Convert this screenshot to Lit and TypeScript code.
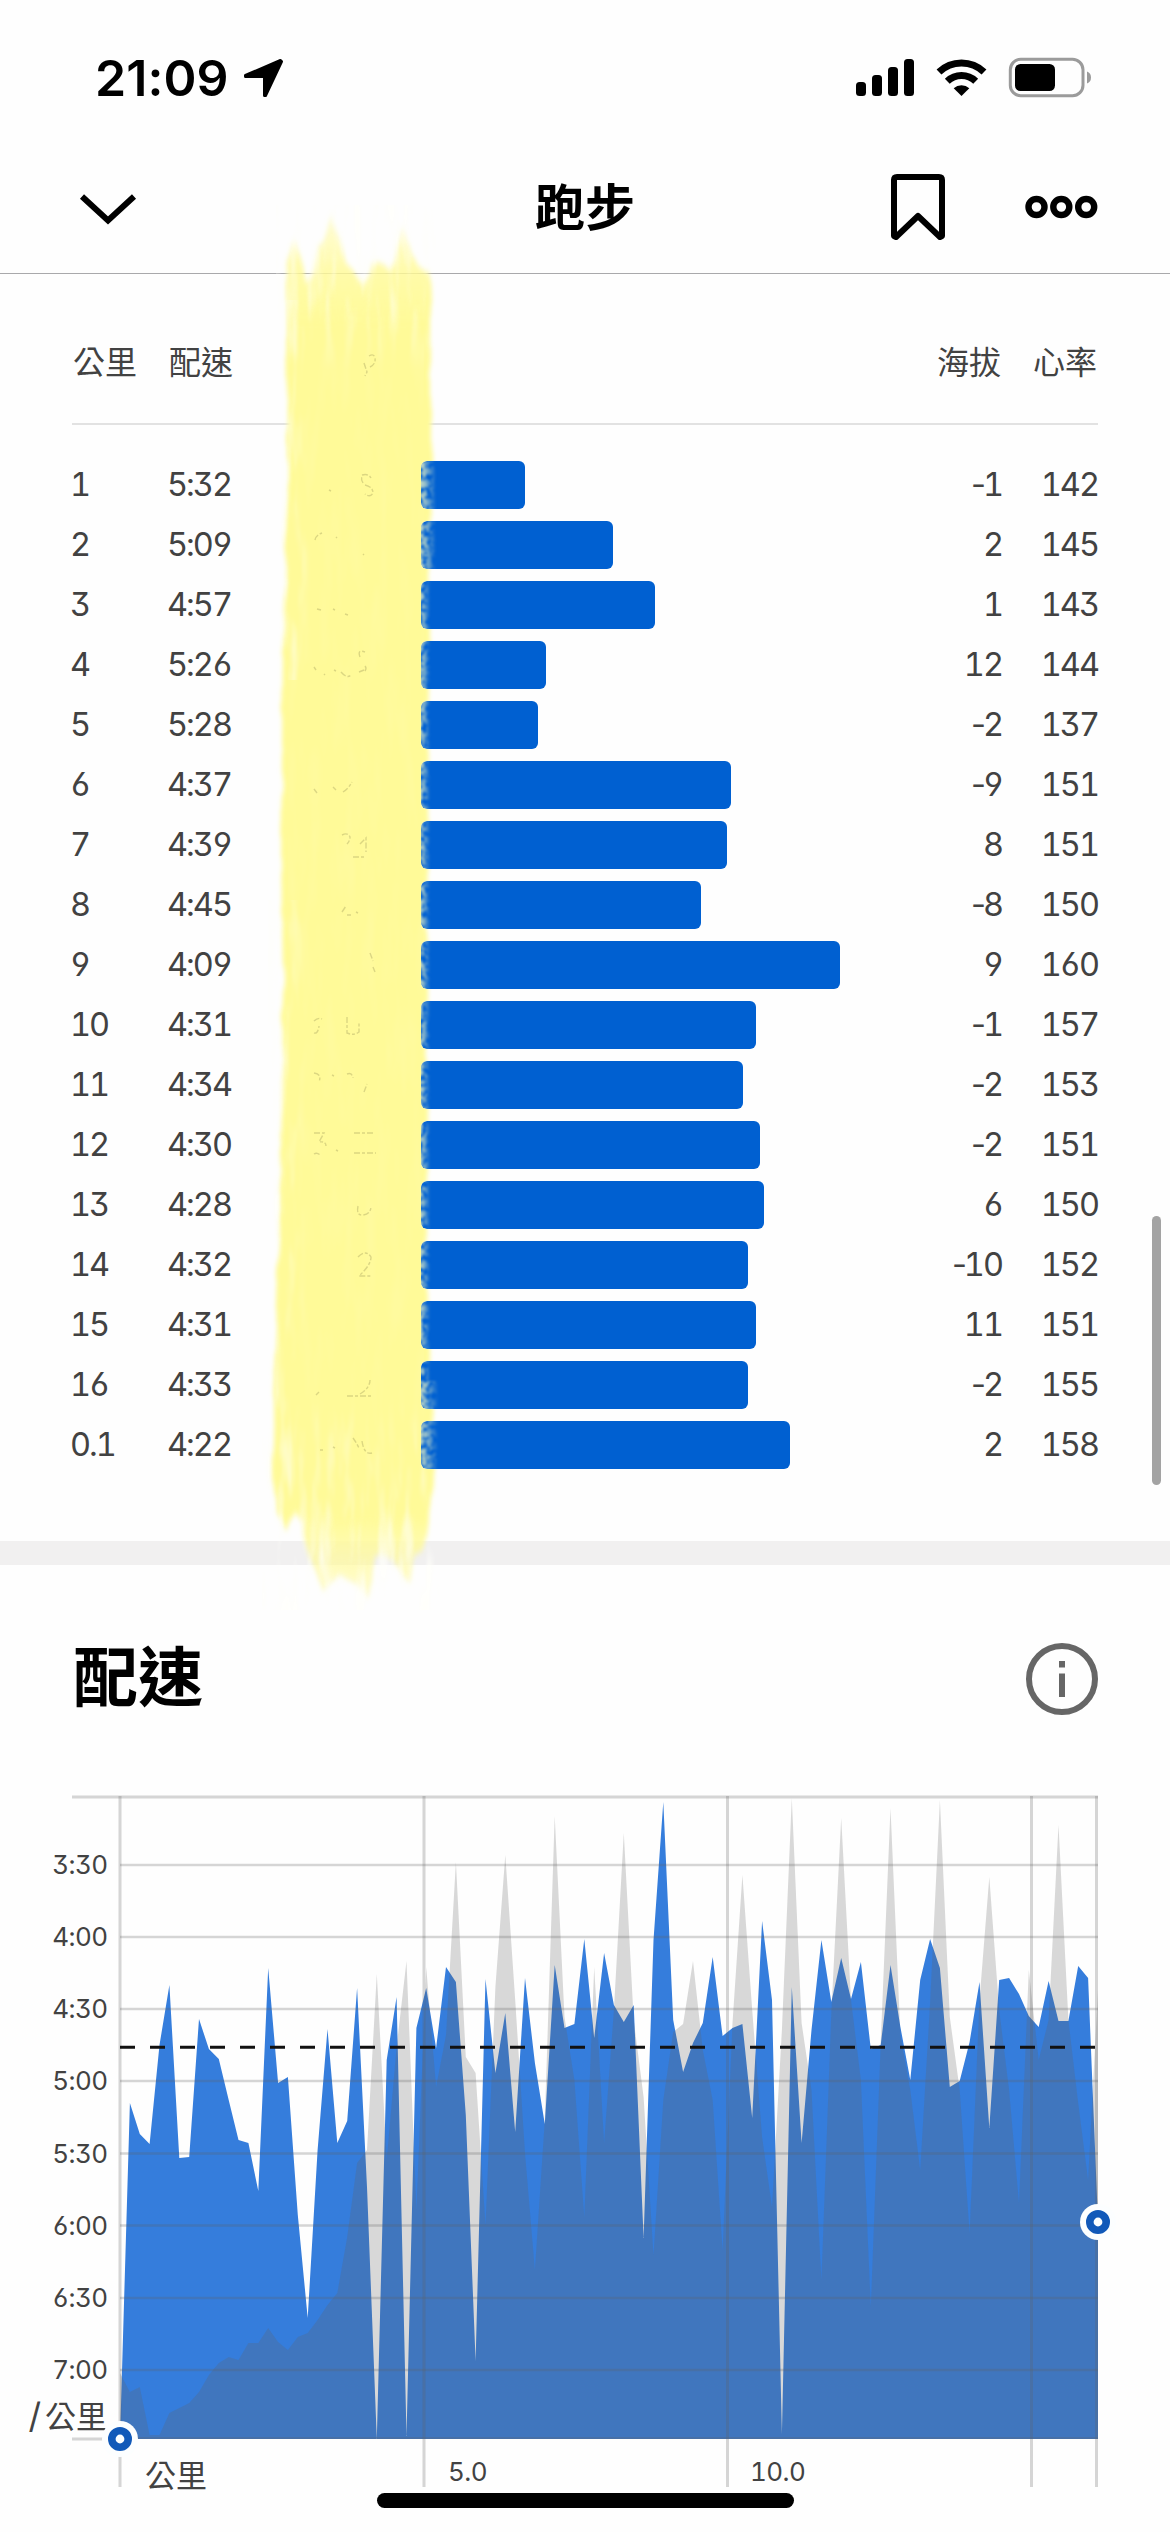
import { LitElement, html, css, svg } from "lit";
import { customElement } from "lit/decorators.js";

interface Split {
  km: string;
  pace: string;
  width: number;
  elev: string;
  hr: string;
}

const rows: [string, string, number, string, string][] = [
  ["1", "5:32", 104, "-1", "142"],
  ["2", "5:09", 192, "2", "145"],
  ["3", "4:57", 234, "1", "143"],
  ["4", "5:26", 125, "12", "144"],
  ["5", "5:28", 117, "-2", "137"],
  ["6", "4:37", 310, "-9", "151"],
  ["7", "4:39", 306, "8", "151"],
  ["8", "4:45", 280, "-8", "150"],
  ["9", "4:09", 419, "9", "160"],
  ["10", "4:31", 335, "-1", "157"],
  ["11", "4:34", 322, "-2", "153"],
  ["12", "4:30", 339, "-2", "151"],
  ["13", "4:28", 343, "6", "150"],
  ["14", "4:32", 327, "-10", "152"],
  ["15", "4:31", 335, "11", "151"],
  ["16", "4:33", 327, "-2", "155"],
  ["0.1", "4:22", 369, "2", "158"],
];
const splits: Split[] = rows.map(([km, pace, width, elev, hr]) => ({ km, pace, width, elev, hr }));

/* Chart samples, one every 978/99 px, as heights on the chart canvas. */
const pace = [
  2439, 2103, 2134, 2144, 2045, 1985, 2158, 2157, 2019, 2049, 2059, 2100, 2140, 2143, 2191, 1968, 2083, 2077, 2215, 2318,
  2150, 2029, 2143, 2121, 1988, 2187, 2439, 2060, 1997, 2436, 2028, 1988, 2048, 1967, 1982, 2115, 2361, 1979, 2073, 2013,
  2132, 1978, 2063, 2124, 1965, 2028, 2024, 1939, 2038, 1953, 2005, 2022, 2005, 2238, 1940, 1802, 2020, 2072, 2043, 2023,
  1957, 2036, 2028, 2024, 2118, 1921, 2000, 2434, 1987, 2143, 2030, 1940, 2002, 1958, 1999, 1962, 2049, 2045, 1965, 2027,
  2080, 1980, 1939, 1968, 2087, 2081, 2042, 1982, 2128, 1980, 1978, 1994, 2016, 2027, 1981, 2021, 2021, 1966, 1978, 2222,
];
const shade = [
  2373, 2392, 2387, 2435, 2435, 2413, 2408, 2403, 2392, 2375, 2363, 2357, 2360, 2343, 2343, 2328, 2342, 2350, 2337, 2333,
  2320, 2305, 2293, 2237, 2163, 2150, 1974, 2160, 2047, 1961, 2210, 1967, 2087, 2035, 1862, 2057, 2073, 2225, 1987, 1855,
  2000, 2153, 2270, 2120, 1816, 2017, 2080, 2217, 1967, 2143, 2010, 1833, 2020, 2097, 2255, 2100, 2032, 2024, 1961, 2050,
  2100, 2250, 2023, 1875, 2010, 2137, 2207, 2030, 1798, 2023, 2090, 2280, 2013, 1818, 2000, 2080, 2307, 2043, 1808, 2035,
  2090, 2170, 2003, 1800, 2017, 2090, 2233, 2000, 1877, 2010, 2090, 2203, 1970, 2060, 2020, 1825, 2020, 2103, 2180, 1990,
];
const TOP = 1770;
const px = (i: number) => 120 + (i * 978) / 99;
const area = (v: number[]) =>
  `M120 ${2439 - TOP} ` + v.map((y, i) => `L${px(i).toFixed(1)} ${y - TOP}`).join(" ") + ` L1098 ${2439 - TOP} Z`;

const yTicks: [string, number][] = [
  ["3:30", 95], ["4:00", 167], ["4:30", 239], ["5:00", 311], ["5:30", 383.5], ["6:00", 455.5], ["6:30", 528], ["7:00", 600],
];

/* Remnants of the digits that still show through the marker. */
const remnants = [
  "M369 356q5-3 6 2q1 6-5 9m-6-4l3 9l-2 4",
  "M362 475q6-2 9 3m-8 5q-3-5 0-8m2 10q8 2 8 8q-3 5-8 1m-36-4l2 1",
  "M315 540q1-5 7-7m14 4l1 1m26 16l1 1",
  "M317 609l4 1m12-1l2 1m10 4l3 1",
  "M314 667l2 3m8 4l1 1m9-5l2 1m5 1q6 7 10 3m9-18q-3-8 5-5m0 14q2 2 0 5m-6 1l5-2",
  "M314 789l3 4m16-6l3 3m7 2q6-4 9-10",
  "M342 835q6-3 8 2q0 4-3 7m13 0l6-6v14m-13 5h13",
  "M342 912l4-6m1 9h4m5-3l2 1",
  "M370 953l3 8m0 6l2 5",
  "M314 1033q4 1 5-7m-5-5q4-4 8-2m25-2v16q7 3 12-1v-10",
  "M314 1073q8 1 5 9m13-7l2 1m13-2q5-2 6 4m11 14l3-8",
  "M314 1133h10l-5 9q7-1 7 4m-12 8q3-2 6 1m16-5l2 1m16-18h20m-20 20h22",
  "M358 1206q-2 10 5 9q8-1 8-9",
  "M358 1257q8-8 13 0q0 8-12 19h13",
  "M316 1395l3-3m28 4h26m-13-2q10-6 10-14",
  "M320 1450h3m10-3l2 1m18-10q3 4 6 10m3-7q2 14 10 12",
];

@customElement("app-root")
export class AppRoot extends LitElement {
  static styles = css`
    :host {
      display: block;
      position: relative;
      width: 1170px;
      height: 2532px;
      overflow: hidden;
      background: #fefefe;
      color: #424242;
      font-family: "Inter", "Noto Sans CJK TC", sans-serif;
    }
    svg { display: block; overflow: visible; }
    .status {
      box-sizing: border-box;
      height: 122px;
      padding: 58px 79px 0 95px;
      display: flex;
      justify-content: space-between;
      align-items: flex-start;
      color: #000;
    }
    .clock { display: flex; align-items: flex-start; gap: 13px; }
    .time { font-size: 50px; line-height: 40px; font-weight: 600; letter-spacing: 0.1px; width: 135px; white-space: nowrap; }
    .nav {
      box-sizing: border-box;
      height: 152px;
      padding: 0 72px 0 80px;
      border-bottom: 1px solid #a9a9ab;
      display: grid;
      grid-template-columns: 1fr auto 1fr;
      align-items: start;
    }
    .nav .left { padding-top: 72px; }
    .nav h1 { margin: 0; padding-top: 54px; font-size: 50px; line-height: 64px; font-weight: 700; color: #000; transform: translateX(-4px); }
    .nav .right { display: flex; justify-content: flex-end; gap: 80px; padding-top: 52px; }
    .nav .dots { padding-top: 21px; }
    .table { box-sizing: border-box; height: 1267px; padding: 0 72px; }
    .row, .head {
      display: grid;
      grid-template-columns: 97px 252px 1fr 160px 96px;
      align-items: center;
      padding-right: 1px;
    }
    .head {
      box-sizing: border-box;
      height: 151px;
      padding-top: 53px;
      padding-bottom: 24px;
      border-bottom: 2px solid #e2e2e2;
      margin-bottom: 30px;
      font-size: 32px;
      line-height: 40px;
    }
    .head .first { padding-left: 1px; }
    .row { height: 60px; font-size: 32.5px; line-height: 60px; letter-spacing: -2px; font-feature-settings: "tnum", "cv03", "cv04", "cv09"; }
    .row .km, .row .pace { margin-left: -2px; }
    .num { text-align: right; }
    .row .num { margin-right: -1px; }
    .minus { font-feature-settings: "tnum" 0; margin-right: -1px; }
    .bar { height: 48px; border-radius: 6px; background: #0060d1; }
    .divider { height: 24px; background: #f1f0f0; }
    .title { display: flex; justify-content: space-between; align-items: flex-start; padding: 78px 72px 0 73px; height: 127px; }
    .title h2 { margin: 0; font-size: 65px; line-height: 70px; font-weight: 700; color: #000; }
    .axis { font-size: 26px; fill: #424242; letter-spacing: -0.6px; font-feature-settings: "tnum", "cv03", "cv04", "cv09"; }
    .unit { font-size: 31px; letter-spacing: 0; }
    .slash { font-size: 35px; letter-spacing: 4px; }
    .brush { position: absolute; left: 0; top: 0; pointer-events: none; }
    .scroll { position: absolute; left: 1152px; top: 1216px; width: 9px; height: 269px; border-radius: 5px; background: #a3a3a3; }
    .home { position: absolute; left: 377px; top: 2493px; width: 417px; height: 15px; border-radius: 8px; background: #000; }
  `;

  private statusBar() {
    return html`
      <div class="status">
        <div class="clock">
          <span class="time">21:09</span>
          <svg width="40" height="40" viewBox="0 0 40 40">
            <path d="M37.500 2.500L38.500 3.500L22.500 37.500L21.500 37.500V19.500L20.500 18.500H2.500V17.500Z" stroke="#000" stroke-width="3" stroke-linejoin="round" />
          </svg>
        </div>
        <svg width="235" height="40" viewBox="856 58 235 40">
          <rect x="856" y="82" width="10" height="14" rx="3.500" />
          <rect x="872" y="75" width="10" height="21" rx="3.500" />
          <rect x="888" y="67" width="10" height="29" rx="3.500" />
          <rect x="904" y="59" width="10" height="37" rx="3.500" />
          <path d="M961.500 96L953.700 88.200A11.500 11.500 0 0 1 969.300 88.200Z" />
          <path d="M947.300 81.200A20.500 20.500 0 0 1 975.700 81.200" fill="none" stroke="#000" stroke-width="7" />
          <path d="M939 72A32.500 32.500 0 0 1 984 72" fill="none" stroke="#000" stroke-width="7" />
          <rect x="1010.300" y="59.300" width="72.700" height="36.400" rx="10.500" fill="none" stroke="#9b9b9b" stroke-width="3" />
          <rect x="1015" y="64" width="40" height="27" rx="5.500" />
          <path d="M1087 71.500Q1091 73 1091 77.500T1087 83.500Z" fill="#9b9b9b" />
        </svg>
      </div>
    `;
  }

  private navBar() {
    return html`
      <div class="nav">
        <div class="left">
          <svg width="56" height="30" viewBox="0 0 56 30">
            <path d="M2 2.500L28 26.500L54 2.500" fill="none" stroke="#000" stroke-width="6" />
          </svg>
        </div>
        <h1>跑步</h1>
        <div class="right">
          <svg width="54" height="66" viewBox="0 0 54 66">
            <path d="M3 6Q3 3 6 3H48Q51 3 51 6V62L49 63L27 42L5 63L3 62Z" fill="none" stroke="#000" stroke-width="6" stroke-linejoin="round" />
          </svg>
          <svg class="dots" width="73" height="23" viewBox="0 0 73 23">
            <g fill="none" stroke="#000" stroke-width="6.400">
              <circle cx="11.500" cy="12" r="8" /><circle cx="36.300" cy="12" r="8" /><circle cx="61.200" cy="12" r="8" />
            </g>
          </svg>
        </div>
      </div>
    `;
  }

  private elevation(value: string) {
    return value.startsWith("-")
      ? html`<span class="num"><span class="minus">-</span>${value.slice(1)}</span>`
      : html`<span class="num">${value}</span>`;
  }

  private chart() {
    return html`
      <svg width="1170" height="740" viewBox="0 0 1170 740">
        <path d=${area(pace)} fill="#357ddc" />
        <path d=${area(shade)} fill="#626262" fill-opacity="0.243" />
        <g stroke="#606060" stroke-opacity="0.260" stroke-width="3">
          <path d="M72 27H1098M72 669H120" />
          <path d="M120 668H1098" stroke-width="2" />
          ${yTicks.map(([, y]) => svg`<path d="M120 ${y}H1098" stroke-width="2.400" />`)}
          ${[120, 424, 727.5, 1031.5, 1096.5].map((x) => svg`<path d="M${x} 26V717" />`)}
        </g>
        <path d="M120 277.200H1095" stroke="#111" stroke-width="3" stroke-dasharray="15 15" />
        ${yTicks.map(([t, y]) => svg`<text class="axis" x="107.500" y=${y + 9} text-anchor="end">${t}</text>`)}
        <text class="axis unit" x="107" y="658" text-anchor="end"><tspan class="slash">/</tspan>公里</text>
        <text class="axis unit" x="145" y="716.500">公里</text>
        <text class="axis" x="448" y="710.500">5.0</text>
        <text class="axis" x="750" y="710.500">10.0</text>
        ${[[120, 669], [1098, 452]].map(
          ([x, y]) => svg`
            <circle cx=${x} cy=${y} r="18" fill="#fcfeff" />
            <circle cx=${x} cy=${y} r="8.200" fill="#fcfeff" stroke="#1159b9" stroke-width="7.600" />`
        )}
      </svg>
    `;
  }

  private brush() {
    return html`
      <svg class="brush" width="1170" height="1700" viewBox="0 0 1170 1700">
        <defs>
          <linearGradient id="ink" gradientUnits="userSpaceOnUse" x1="0" y1="215" x2="0" y2="1600">
            <stop offset="0" stop-color="#fffa94" stop-opacity="0.350" />
            <stop offset="0.040" stop-color="#fffa94" stop-opacity="0.800" />
            <stop offset="0.080" stop-color="#fffa98" />
            <stop offset="0.940" stop-color="#fffa98" />
            <stop offset="1" stop-color="#fffa94" stop-opacity="0.400" />
          </linearGradient>
          <filter id="rough" filterUnits="userSpaceOnUse" x="250" y="190" width="210" height="1430">
            <feTurbulence type="fractalNoise" baseFrequency="0.060 0.025" numOctaves="3" seed="4" />
            <feDisplacementMap in="SourceGraphic" scale="8" xChannelSelector="R" yChannelSelector="G" />
            <feGaussianBlur stdDeviation="2 3" />
          </filter>
          <filter id="streak" filterUnits="userSpaceOnUse" x="250" y="190" width="210" height="1430">
            <feTurbulence type="fractalNoise" baseFrequency="0.090 0.012" numOctaves="3" seed="9" />
            <feColorMatrix values="0 0 0 0 1  0 0 0 0 1  0 0 0 0 0.960  0 3.500 0 0 -1.700" result="s" />
            <feGaussianBlur in="s" stdDeviation="0.800 2" result="b" />
            <feComposite in="b" in2="SourceAlpha" operator="in" />
          </filter>
          <filter id="speck" filterUnits="userSpaceOnUse" x="410" y="450" width="40" height="1030">
            <feTurbulence type="fractalNoise" baseFrequency="0.220 0.160" numOctaves="3" seed="3" result="n" />
            <feColorMatrix in="n" values="0 0 0 0 0.680  0 0 0 0 0.800  0 0 0 0 0.560  0 4 0 0 -1.350" result="c" />
            <feComposite in="c" in2="SourceAlpha" operator="in" />
            <feGaussianBlur stdDeviation="0.800" />
          </filter>
          <clipPath id="bars">
            ${splits.map((_, i) => svg`<rect x="421" y=${461 + i * 60} width="40" height="48" rx="6" />`)}
          </clipPath>
          <mask id="gaps" maskUnits="userSpaceOnUse" x="0" y="0" width="1170" height="1700">
            <rect width="1170" height="1700" fill="#fff" />
            ${splits.map((_, i) => svg`<rect x="421" y=${461 + i * 60} width="40" height="48" rx="6" fill="#000" />`)}
          </mask>
          <linearGradient id="fade" x1="0" x2="1">
            <stop offset="0" stop-opacity="1" />
            <stop offset="0.400" stop-opacity="0.650" />
            <stop offset="1" stop-opacity="0" />
          </linearGradient>
          <linearGradient id="top" x1="0" x2="0" y1="0" y2="1">
            <stop offset="0" stop-opacity="1" /><stop offset="0.450" stop-opacity="0.600" /><stop offset="1" stop-opacity="0" />
          </linearGradient>
          <linearGradient id="bottom" x1="0" x2="0" y1="1" y2="0">
            <stop offset="0" stop-opacity="0.900" /><stop offset="0.450" stop-opacity="0.550" /><stop offset="1" stop-opacity="0" />
          </linearGradient>
          <linearGradient id="edge" x1="0" x2="1">
            <stop offset="0" stop-opacity="0.700" /><stop offset="1" stop-opacity="0" />
          </linearGradient>
        </defs>
        <g mask="url(#gaps)">
          <path
            filter="url(#rough)" fill="url(#ink)"
            d="M286 292L288 258L294 238L300 264L306 286L313 270L319 246L325 240L332 214L338 240L346 262L356 278L364 286L372 262L382 266L390 272L396 250L403 227L410 252L416 266L430 272L431 300L431 500L430 600L428 760L427 1000L427 1200L427 1320L431 1380L434 1440L434 1490L428 1520L424 1550L414 1556L408 1582L401 1574L392 1556L376 1556L368 1598L357 1584L342 1574L324 1590L312 1566L306 1545L303 1522L294 1512L286 1530L277 1512L274 1490L273 1400L276 1330L279 1240L282 1100L283 980L281 860L283 640L286 580L287 440Z"
          />
          <g filter="url(#streak)">
            <path d="M276 205H440V370H276Z" fill="url(#top)" />
            <path d="M281 300H310V680H281Z" fill="url(#edge)" />
            <path d="M268 900H306V1540H268Z" fill="url(#edge)" />
            <path d="M262 1400H440V1610H262Z" fill="url(#bottom)" />
            <path d="M286 300H424V1500H290Z" fill-opacity="0.060" />
          </g>
        </g>
        <g clip-path="url(#bars)">
          <g filter="url(#speck)">
            <rect x="419" y="461" width="17" height="110" fill="url(#fade)" />
            <rect x="419" y="580" width="11" height="800" fill="url(#fade)" />
            <rect x="419" y="1381" width="19" height="92" fill="url(#fade)" />
          </g>
        </g>
        <g fill="none" stroke="#8f8b52" stroke-opacity="0.320" stroke-width="1.400" stroke-dasharray="6 2 3 2">
          ${remnants.map((d) => svg`<path d=${d} />`)}
        </g>
      </svg>
    `;
  }

  render() {
    return html`
      ${this.statusBar()} ${this.navBar()}
      <div class="table">
        <div class="head">
          <span class="first">公里</span><span>配速</span><span></span>
          <span class="num">海拔</span><span class="num">心率</span>
        </div>
        ${splits.map(
          (s) => html`
            <div class="row">
              <span class="km">${s.km}</span><span class="pace">${s.pace}</span>
              <div class="bar" style="width:${s.width}px"></div>
              ${this.elevation(s.elev)}<span class="num">${s.hr}</span>
            </div>
          `
        )}
      </div>
      <div class="divider"></div>
      <div class="title">
        <h2>配速</h2>
        <svg width="72" height="72" viewBox="0 0 72 72">
          <circle cx="36" cy="36" r="33" fill="none" stroke="#666" stroke-width="6" />
          <path d="M36 18V24.500M36 30.500V54" stroke="#666" stroke-width="6" />
        </svg>
      </div>
      ${this.chart()} ${this.brush()}
      <div class="scroll"></div>
      <div class="home"></div>
    `;
  }
}
